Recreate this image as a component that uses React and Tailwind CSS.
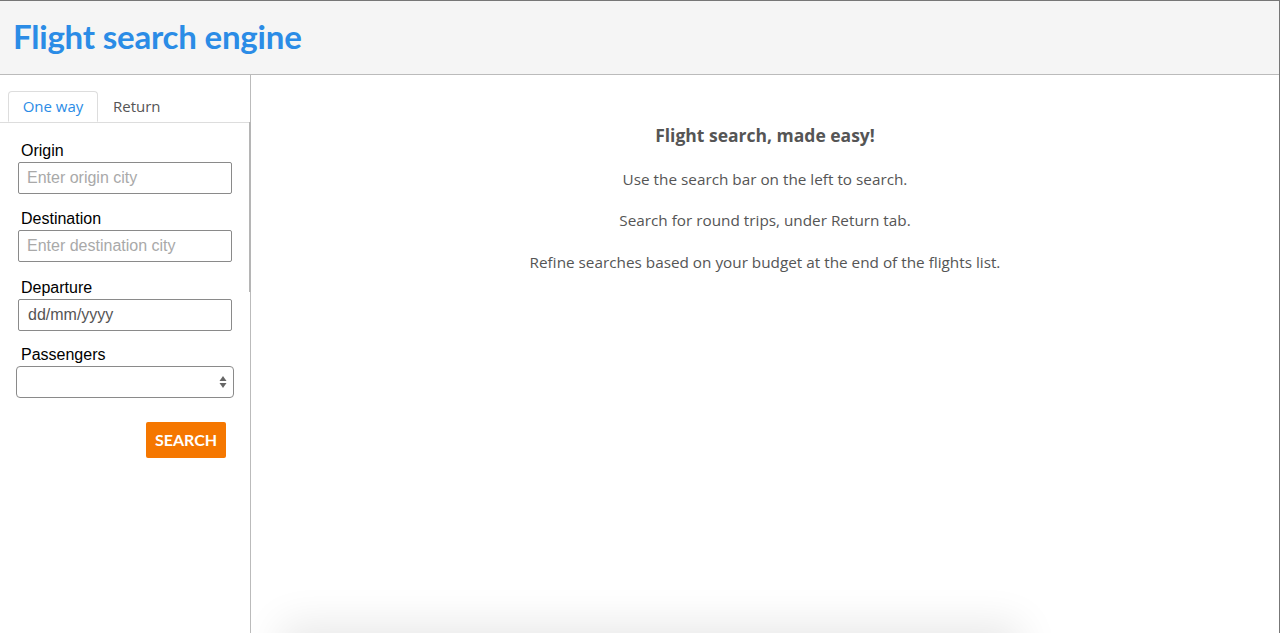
import React from "react";

export default function App() {
  const sans = { fontFamily: "Lato, 'Noto Sans', sans-serif" };
  const open = { fontFamily: "'Open Sans', 'Noto Sans', sans-serif" };
  const inputCls = "mt-[1px] block w-[214px] h-[32px] border border-[#8a8a8a] rounded-[2px] px-[8px] text-[16px] placeholder:text-[#a9a9a9] outline-none";
  return (
    <div className="w-[1280px] h-[633px] overflow-hidden flex flex-col border-t border-r border-[#777] bg-white" style={sans}>
      <header className="h-[74px] shrink-0 bg-[#f5f5f5] border-b border-[#bbb] flex items-center pl-[13px]">
        <h1 className="text-[33px] font-bold text-[#2b8ce6] tracking-[-0.2px] leading-none pb-[2px]">Flight search engine</h1>
      </header>
      <div className="flex flex-1 min-h-0">
        <aside className="w-[251px] shrink-0 border-r border-[#bbb] relative">
          <div className="absolute right-[-1px] top-[47px] w-[2px] h-[170px] bg-[#b5b5b5]" />
          <div className="flex pt-[16px] pl-[8px] border-b border-[#ddd]" style={open}>
            <div className="w-[90px] h-[31px] -mb-px border border-[#ddd] border-b-white rounded-t-[4px] bg-white flex items-center justify-center text-[15px] text-[#2b8ce6]">One way</div>
            <div className="h-[31px] flex items-center pl-[15px] text-[15px] text-[#555]">Return</div>
          </div>
          <form className="pl-[18px] pr-[18px] pt-[18px]" style={{ fontFamily: "'Liberation Sans', Arial, sans-serif" }}>
            <label className="block pl-[3px] text-[16px] leading-[20px] text-black">Origin</label>
            <input className={inputCls} placeholder="Enter origin city" />
            <label className="block mt-[15px] pl-[3px] text-[16px] leading-[20px] text-black">Destination</label>
            <input className={inputCls} placeholder="Enter destination city" />
            <label className="block mt-[16px] pl-[3px] text-[16px] leading-[20px] text-black">Departure</label>
            <div className="mt-[1px] w-[214px] h-[32px] border border-[#8a8a8a] rounded-[2px] px-[9px] flex items-center text-[16px] text-[#555]">dd/mm/yyyy</div>
            <label className="block mt-[14px] pl-[3px] text-[16px] leading-[20px] text-black">Passengers</label>
            <div className="mt-[1px] -ml-[2px] w-[218px] h-[32px] border border-[#8a8a8a] rounded-[4px] flex items-center justify-end pr-[6px]">
              <svg width="8" height="14" viewBox="0 0 8 14"><path d="M4 1 L7.5 6 H0.5 Z" fill="#666" /><path d="M4 13 L7.5 8 H0.5 Z" fill="#666" /></svg>
            </div>
            <div className="flex justify-end mt-[24px] pr-[6px]">
              <button type="button" className="w-[80px] h-[36px] bg-[#f57700] rounded-[2px] text-white text-[16px] font-bold" style={sans}>SEARCH</button>
            </div>
          </form>
        </aside>
        <main className="flex-1 relative flex flex-col items-center text-[#555]" style={open}>
          <h2 className="mt-[48px] text-[17.5px] leading-[24px] font-bold">Flight search, made easy!</h2>
          <p className="mt-[22px] text-[15.3px] leading-[20px]">Use the search bar on the left to search.</p>
          <p className="mt-[21px] text-[15.3px] leading-[20px]">Search for round trips, under Return tab.</p>
          <p className="mt-[22px] text-[15.3px] leading-[20px]">Refine searches based on your budget at the end of the flights list.</p>
          <div className="absolute left-[40px] top-full w-[720px] h-[40px] shadow-[0_0_40px_10px_rgba(0,0,0,0.09)]" />
        </main>
      </div>
    </div>
  );
}
